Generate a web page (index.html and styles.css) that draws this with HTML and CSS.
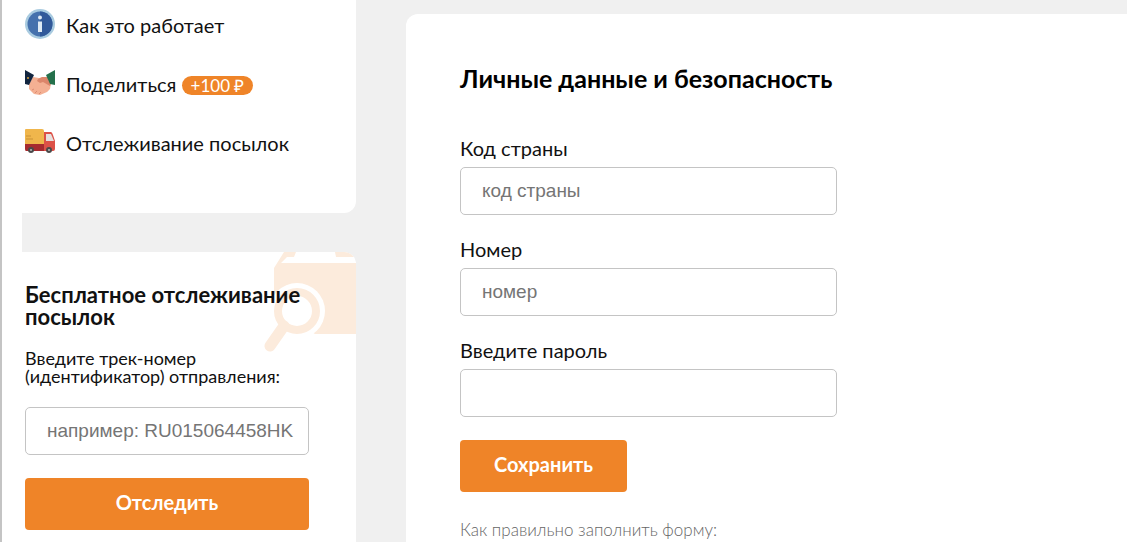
FILE: index.html
```html
<!DOCTYPE html>
<html lang="ru">
<head>
    <meta charset="UTF-8">
    <meta name="viewport" content="width=device-width, initial-scale=1.0">
    <title>Личные данные и безопасность</title>
    <link rel="stylesheet" href="styles.css">
</head>
<body>
    <div class="page">
        <aside class="sidebar">
            <nav class="menu">
                <a href="#how" class="menu-item">
                    <svg class="menu-icon" viewBox="0 0 30 30">
                        <circle cx="15" cy="15" r="15" fill="#a9cbe0"/>
                        <circle cx="15" cy="15" r="12.5" fill="#4571ad"/>
                        <path d="M15 2.5a12.5 12.5 0 0 1 0 25z" fill="#31599a"/>
                        <circle cx="15" cy="8.5" r="2" fill="#dfeaf4"/>
                        <path d="M13 12.5h4V23h-4z" fill="#dfeaf4"/>
                    </svg>
                    <span>Как это работает</span>
                </a>
                <a href="#share" class="menu-item">
                    <svg class="menu-icon" viewBox="0 0 30 30">
                        <path d="M8 9l6 1 8-1 4 6-1 6-3 3-7 3-6-1-5-5 0-5z" fill="#f4b093"/>
                        <path d="M13 11l4-2h6l3 6-1 3-7-4-3 1-3-2z" fill="#dc866b"/>
                        <path d="M7 22l2-1M10 25l2-2M14 26l2-2" stroke="#dd8d73" fill="none"/>
                        <path d="M0 2l9 5-5 10-4-1z" fill="#12253f"/>
                        <path d="M30 2l-9 5 4 9 5 1z" fill="#24704b"/>
                        <circle cx="3" cy="10" r="1" fill="#d7a13d"/>
                    </svg>
                    <span>Поделиться <span class="bonus">+100 ₽</span></span>
                </a>
                <a href="#tracking" class="menu-item">
                    <svg class="menu-icon" viewBox="0 1 30 30">
                        <path d="M0 18h19v7H1q-1 0-1-2z" fill="#a62b2f"/>
                        <path d="M1 3h16q2 0 2 2v13H0V4q0-1 1-1z" fill="#f0b64c"/>
                        <path d="M1 10h5M1 13h7" stroke="#c99237"/>
                        <path d="M19 6h7q1 0 2 3l2 6v8q0 2-2 2h-9z" fill="#dc5147"/>
                        <path d="M21 8h5l3 7h-8z" fill="#e5e0dd"/>
                        <circle cx="6" cy="24" r="3" fill="#4a4a4a"/>
                        <circle cx="6" cy="24" r="1" fill="#bbb"/>
                        <circle cx="24" cy="24" r="3" fill="#4a4a4a"/>
                        <circle cx="24" cy="24" r="1" fill="#bbb"/>
                    </svg>
                    <span>Отслеживание посылок</span>
                </a>
            </nav>

            <form class="track">
                <svg class="track-picture" viewBox="0 0 92 100">
                    <path d="M10 34V16L20 0h12l-2 5H23l-6 6h75v71H10z" fill="#fcebdc"/>
                    <path d="M71 0h21v5H72z" fill="#fcebdc"/>
                    <circle cx="33" cy="59" r="28" fill="#fff"/>
                    <path d="M0 67h24l27 15v18H0z" fill="#fff"/>
                    <circle cx="33" cy="59" r="19" fill="none" stroke="#fcebdc" stroke-width="8"/>
                    <path d="M20 74L6 94" stroke="#fcebdc" stroke-width="11" stroke-linecap="round"/>
                </svg>
                <h2>Бесплатное отслеживание посылок</h2>
                <label for="trackNumber">Введите трек-номер (идентификатор) отправления:</label>
                <input type="text" id="trackNumber" placeholder="например: RU015064458HK">
                <button type="button">Отследить</button>
            </form>
        </aside>

        <main class="content">
            <h1>Личные данные и безопасность</h1>
            <form class="profile">
                <label for="country">Код страны</label>
                <input type="text" id="country" placeholder="код страны">
                <label for="phone">Номер</label>
                <input type="text" id="phone" placeholder="номер">
                <label for="password">Введите пароль</label>
                <input type="password" id="password">
                <button type="button">Сохранить</button>
            </form>
            <p class="hint">Как правильно заполнить форму:</p>
        </main>
    </div>
</body>
</html>
```
FILE: styles.css
```css
* {
    box-sizing: border-box;
}

body {
    margin: 0;
    padding-left: 20px;
    border-left: 2px solid #c4c4c4;
    background: #fff;
    color: #111;
    font-family: Lato, sans-serif;
    font-size: 20px;
}

.page {
    display: flex;
    gap: 50px;
    min-height: 100vh;
    background: #f0f0f0;
}

/* Left column */
.sidebar {
    display: flex;
    flex-direction: column;
    gap: 39px;
    flex: 0 0 334px;
}

.menu {
    display: flex;
    flex-direction: column;
    gap: 29px;
    padding: 9px 3px 56px;
    background: #fff;
    border-radius: 0 0 12px 0;
}

.menu-item {
    display: flex;
    align-items: center;
    gap: 11px;
    height: 30px;
    color: #111;
    text-decoration: none;
}

.menu-item > span {
    padding-top: 2px;
    line-height: 26px;
}

.menu-icon {
    width: 30px;
    height: 30px;
}

.bonus {
    display: inline-block;
    padding: 0 9px;
    border-radius: 10px;
    background: #ef8428;
    color: #fff;
    font-size: 17px;
    line-height: 19px;
}

/* Tracking form */
.track {
    position: relative;
    flex: 1;
    padding: 32px 47px 12px 3px;
    background: #fff;
    border-radius: 0 12px 0 0;
    overflow: hidden;
}

.track-picture {
    position: absolute;
    top: 0;
    right: 0;
    width: 92px;
    height: 100px;
}

.track h2 {
    position: relative;
    margin: 0 0 21px;
    font-size: 22px;
    line-height: 22px;
}

.track label {
    display: block;
    margin-bottom: 22px;
    font-size: 18px;
    line-height: 18px;
}

/* Form controls */
input {
    display: block;
    width: 100%;
    height: 48px;
    padding: 0 10px 0 21px;
    border: 1px solid #c4c4c4;
    border-radius: 5px;
    background: #fff;
    font-family: "Liberation Sans", Arial, sans-serif;
    font-size: 19px;
}

input::placeholder {
    color: #757575;
}

button {
    display: block;
    height: 52px;
    padding: 0 34px 4px;
    border: none;
    border-radius: 4px;
    background: #ef8428;
    color: #fff;
    font-family: inherit;
    font-size: 20px;
    font-weight: bold;
    cursor: pointer;
}

.track button {
    width: 100%;
    margin-top: 23px;
}

/* Main card */
.content {
    flex: 1;
    margin-top: 14px;
    padding: 49px 54px 0;
    background: #fff;
    border-radius: 12px 0 0 0;
}

h1 {
    margin: 0 0 44px;
    color: #000;
    font-size: 25px;
    line-height: 30px;
}

.profile {
    max-width: 377px;
}

.profile label {
    display: block;
    margin-bottom: 8px;
    line-height: 22px;
}

.profile input {
    margin-bottom: 23px;
}

.hint {
    margin: 28px 0 0;
    color: #666;
    font-size: 17px;
    font-weight: 300;
    line-height: 20px;
}
```
